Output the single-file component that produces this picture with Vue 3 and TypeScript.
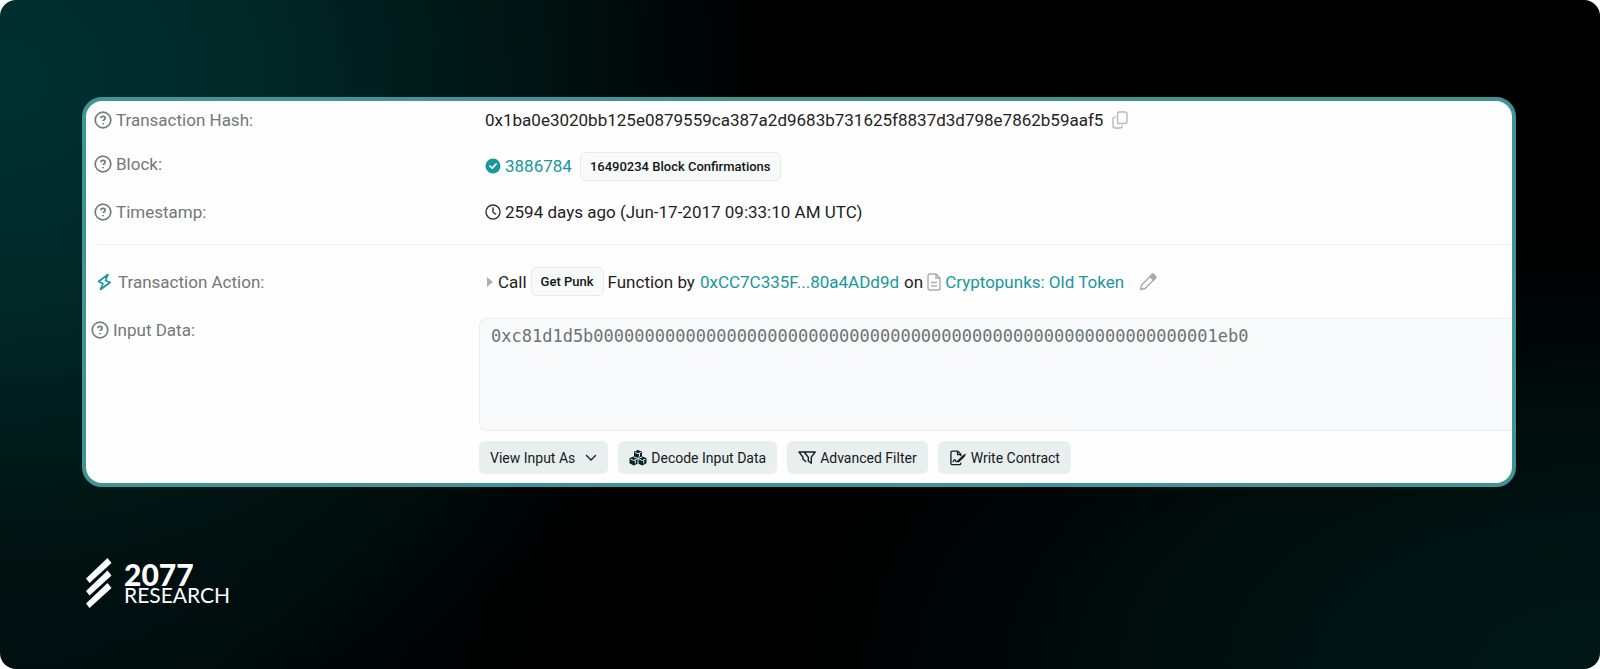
<script setup lang="ts">
import { ref } from 'vue'

const hash = '0x1ba0e3020bb125e0879559ca387a2d9683b731625f8837d3d798e7862b59aaf5'
const inputData = ref('0xc81d1d5b' + '0'.repeat(60) + '1eb0')
</script>

<template>
  <main class="page">
    <section class="card" aria-label="Transaction details">
      <div class="row first">
        <div class="label">
          <svg class="help" viewBox="0 0 18 18" aria-hidden="true"><circle cx="9" cy="9" r="7.8" /><path d="M6.8 7.2C6.9 6 7.8 5.4 9 5.4c1.300 0 2.200.7 2.200 1.800 0 1.500-2.100 1.500-2.100 2.900M9.100 12v1.300" /></svg>
          <span>Transaction Hash:</span>
        </div>
        <div class="value">
          <span>{{ hash }}</span>
          <button class="icon-button copy" type="button" aria-label="Copy transaction hash">
            <svg viewBox="0 0 16 18" aria-hidden="true"><rect x="5.500" y="1" width="9.500" height="11.500" rx="2" /><path d="M3.500 6H3a2 2 0 0 0-2 2v7a2 2 0 0 0 2 2h5a2 2 0 0 0 2-2v-.5" /></svg>
          </button>
        </div>
      </div>

      <div class="row second">
        <div class="label">
          <svg class="help" viewBox="0 0 18 18" aria-hidden="true"><circle cx="9" cy="9" r="7.8" /><path d="M6.8 7.2C6.9 6 7.8 5.4 9 5.4c1.300 0 2.200.7 2.200 1.800 0 1.500-2.100 1.500-2.100 2.900M9.100 12v1.300" /></svg>
          <span>Block:</span>
        </div>
        <div class="value">
          <svg class="status" viewBox="0 0 16 16" aria-hidden="true"><circle cx="8" cy="8" r="7.500" fill="#16989d" /><path d="m5 8.100 2.200 2.100L11 6" fill="none" stroke="#fff" stroke-width="1.700" stroke-linecap="round" stroke-linejoin="round" /></svg>
          <a href="#block">3886784</a>
          <span class="badge confirmations">16490234 Block Confirmations</span>
        </div>
      </div>

      <div class="row third">
        <div class="label">
          <svg class="help" viewBox="0 0 18 18" aria-hidden="true"><circle cx="9" cy="9" r="7.8" /><path d="M6.8 7.2C6.9 6 7.8 5.4 9 5.4c1.300 0 2.200.7 2.200 1.800 0 1.500-2.100 1.500-2.100 2.900M9.100 12v1.300" /></svg>
          <span>Timestamp:</span>
        </div>
        <div class="value">
          <svg class="status" viewBox="0 0 16 16" fill="none" stroke="#303434" stroke-width="1.400" stroke-linecap="round" aria-hidden="true"><circle cx="8" cy="8" r="7" /><path d="M8 4v4.200l2.700 1.900" /></svg>
          <span>2594 days ago (Jun-17-2017 09:33:10 AM UTC)</span>
        </div>
      </div>

      <hr class="divider" />

      <div class="row action">
        <div class="label">
          <svg class="bolt" viewBox="0 0 16 18" aria-hidden="true"><path d="M12 1.500 2.500 8.500l4.500 2L4.500 16.500 14 9.500l-4.500-2z" /></svg>
          <span>Transaction Action:</span>
        </div>
        <div class="value">
          <svg class="caret" viewBox="0 0 6 10" aria-hidden="true"><path d="M0 0l6 5-6 5z" fill="#adb1b1" /></svg>
          <span>Call</span>
          <span class="badge method">Get Punk</span>
          <span>Function by</span>
          <a class="sender" href="#sender">0xCC7C335F...80a4ADd9d</a>
          <span>on</span>
          <svg class="document" viewBox="0 0 14 18" aria-hidden="true"><path d="M9 1H3a2 2 0 0 0-2 2v12a2 2 0 0 0 2 2h8a2 2 0 0 0 2-2V5zM9 1v4h4M4 9.500h6M4 13h6" /></svg>
          <a href="#token">Cryptopunks: Old Token</a>
          <button class="icon-button edit" type="button" aria-label="Edit name tag">
            <svg viewBox="0 0 18 18" aria-hidden="true"><path d="m1.500 16.500 1-4.500L12.800 1.800q1-1 2 0l1.400 1.400q1 1 0 2L6 15.500z" /><path class="tip" d="m11 3.600 1.800-1.800q1-1 2 0l1.400 1.400q1 1 0 2L14.400 7z" /></svg>
          </button>
        </div>
      </div>

      <div class="row input-row">
        <label class="label" for="input-data">
          <svg class="help" viewBox="0 0 18 18" aria-hidden="true"><circle cx="9" cy="9" r="7.8" /><path d="M6.8 7.2C6.9 6 7.8 5.4 9 5.4c1.300 0 2.200.7 2.200 1.800 0 1.500-2.100 1.500-2.100 2.900M9.100 12v1.300" /></svg>
          <span>Input Data:</span>
        </label>
        <div class="input-value">
          <textarea id="input-data" v-model="inputData" readonly spellcheck="false"></textarea>
          <div class="buttons">
            <button type="button" aria-haspopup="menu">
              <span>View Input As</span>
              <svg class="chevron" viewBox="0 0 12 8" aria-hidden="true"><path d="m1.500 1.500 4.500 4.500 4.500-4.500" /></svg>
            </button>
            <button type="button">
              <svg class="cubes" viewBox="0 0 18 16" aria-hidden="true">
                <path class="solid" d="m9 0 4 1.700v4.600l4.500 2v5L13.200 15.500 9 13.600l-4.200 1.900L.5 13.300v-5l4.500-2V1.700z" />
                <path class="seam" d="M6.300 2.500 9 3.700l2.700-1.200M5 7l4 1.500L13 7M9 8.500v5M2 9.300l2.800 1.200 2.700-1.200M10.500 9.300l2.700 1.200L16 9.300M10.500 3.800v2.400L9.500 7M6.300 10.700V13M14.700 10.700V13" />
              </svg>
              <span>Decode Input Data</span>
            </button>
            <button type="button">
              <svg class="filter" viewBox="0 0 18 16" aria-hidden="true"><path d="M6.200 2h11l-3.900 5.200v6L10.300 11V7.200zM6.200 2H1l3.900 5.200V9l2.800 2.600" /></svg>
              <span>Advanced Filter</span>
            </button>
            <button type="button">
              <svg class="write" viewBox="0 0 18 17" aria-hidden="true"><path d="M12 6V4.500L8.800 1.200H3a1.500 1.500 0 0 0-1.500 1.500V14A1.500 1.500 0 0 0 3 15.500h7.500A1.500 1.500 0 0 0 12 14M8.500 1.500V5H12M3.800 12.500q1.700-4 2.800-.7.700 1 1.500.3h1" /><path class="pen" d="m9.500 11.800 5.800-5.600" /><path d="m16 5.500.7-.7" /></svg>
              <span>Write Contract</span>
            </button>
          </div>
        </div>
      </div>
    </section>

    <footer class="brand">
      <svg class="mark" viewBox="0 0 26 50" aria-hidden="true"><path d="M21.500 0l4 5L3.500 25l-3.500-4.500zM21.500 12.500l4 5L3.500 37.500l-3.500-4.500zM21.500 25l4 5L3.500 50l-3.500-4.500z" fill="#fff" /></svg>
      <div class="wordmark">
        <strong>2077</strong>
        <span>RESEARCH</span>
      </div>
    </footer>
  </main>
</template>

<style>
body {
  margin: 0;
  background: #fff;
}
</style>

<style scoped>
.page {
  box-sizing: border-box;
  min-height: 100vh;
  padding: 97px 84px 60px 82px;
  border-radius: 16px;
  background:
    radial-gradient(ellipse 48% 100% at 0% 12%, #003131 0%, #002726 35%, #001110 72%, transparent 100%),
    radial-gradient(ellipse 50% 65% at 100% 100%, #001718 0%, #000e0d 55%, transparent 100%),
    radial-gradient(ellipse 35% 60% at 0% 80%, #001315 0%, transparent 100%),
    #000;
  color: #1f2323;
  font: 17px/24px Roboto, sans-serif;
}

.card {
  overflow: hidden;
  border: 4px solid #409494;
  border-radius: 20px;
  background: #fefefe;
}

.row {
  display: grid;
  grid-template-columns: 393px minmax(0, 1fr);
  align-items: center;
}

.first { min-height: 38px; }
.second { min-height: 52px; }
.third { min-height: 42px; }
.action { min-height: 73px; }

.label {
  display: flex;
  align-items: center;
  gap: 4px;
  padding-left: 8px;
  color: #737777;
}

.value {
  display: flex;
  align-items: center;
  padding-left: 6px;
  white-space: nowrap;
}

.second .value { padding-top: 2px; }
.second .label { padding-bottom: 2px; }

.help {
  width: 18px;
  height: 18px;
  fill: none;
  stroke: #777b7b;
  stroke-width: 1.700;
}

.status {
  width: 16px;
  height: 16px;
  margin-right: 4px;
}

a {
  color: #16989d;
  text-decoration: none;
}

.badge {
  border: 1px solid #e8eaea;
  border-radius: 6px;
  background: #f8f9f9;
  padding: 0 9px;
  color: #111515;
  font-size: 13px;
  line-height: 27px;
  font-weight: 500;
}

.confirmations { margin-left: 8px; }
.method { margin: 0 4px; }

.icon-button {
  display: flex;
  padding: 0;
  border: 0;
  background: none;
}

.icon-button svg {
  width: 16px;
  height: 18px;
  fill: none;
  stroke: #b6b9b9;
  stroke-width: 1.400;
}

.copy { margin-left: 9px; }
.edit { margin-left: 15px; }

.edit svg {
  width: 18px;
  stroke: #a6a9a9;
}

.edit .tip { fill: #a6a9a9; }

.divider {
  height: 1px;
  margin: 11px 0 0 8px;
  border: 0;
  background: #f0f2f2;
}

.bolt {
  width: 16px;
  height: 18px;
  margin: 0 2px;
  fill: none;
  stroke: #1b969b;
  stroke-width: 1.700;
  stroke-linejoin: round;
}

.caret {
  width: 6px;
  height: 10px;
  margin: 0 5px 0 2px;
}

.sender { margin: 0 5px; }

.document {
  width: 14px;
  height: 18px;
  margin: 0 4px;
  fill: none;
  stroke: #a9adad;
  stroke-width: 1.400;
}

.input-row {
  align-items: start;
  padding-bottom: 9px;
}

.input-row .label { padding-left: 5px; }

textarea {
  display: block;
  box-sizing: border-box;
  width: 100%;
  height: 113px;
  padding: 5px 11px;
  border: 1px solid #eaeeee;
  border-right: 0;
  border-radius: 8px 0 0 8px;
  outline: 0;
  background: #f8fafb;
  color: #6c7373;
  font: 17px/24px "DejaVu Sans Mono", monospace;
  resize: none;
}

.buttons {
  display: flex;
  gap: 10px;
  margin-top: 10px;
}

.buttons button {
  display: flex;
  align-items: center;
  gap: 4px;
  height: 33px;
  padding: 0 11px;
  border: 0;
  border-radius: 6px;
  background: #e9eeee;
  color: #142020;
  font: 14px/20px Roboto, sans-serif;
}

.buttons svg {
  width: 18px;
  height: 16px;
  fill: none;
  stroke: #142020;
  stroke-width: 1.400;
  stroke-linecap: round;
  stroke-linejoin: round;
}

.buttons .chevron {
  width: 12px;
  height: 8px;
  margin-left: 6px;
}

.cubes .solid {
  fill: #062526;
  stroke: none;
}

.cubes .seam {
  stroke: #e9eeee;
  stroke-width: 1;
}

.write .pen { stroke-width: 2.400; }

.brand {
  display: flex;
  gap: 12px;
  margin: 71px 0 0 4px;
  color: #fff;
}

.mark {
  width: 26px;
  height: 50px;
}

.wordmark {
  display: flex;
  flex-direction: column;
  padding-top: 5px;
  font-family: Lato, sans-serif;
}

.wordmark strong {
  font-size: 30px;
  line-height: 22px;
  font-weight: 900;
}

.wordmark span {
  font-size: 21px;
  line-height: 20px;
}
</style>
